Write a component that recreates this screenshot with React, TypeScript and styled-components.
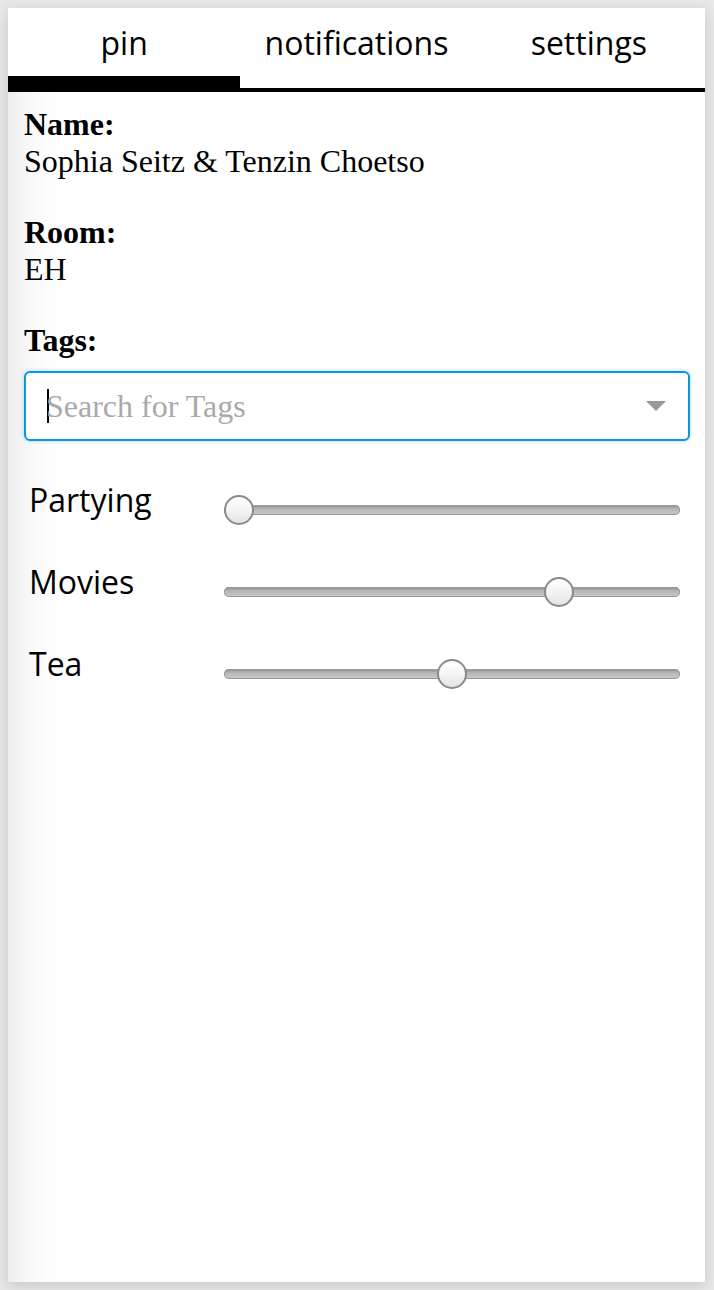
import styled, { createGlobalStyle } from 'styled-components';

const GlobalStyle = createGlobalStyle`
	html, body, #root {
		margin: 0;
		padding: 0;
		background: #e8e8e8;
	}
	body {
		padding: 8px 9px 8px 8px;
		box-sizing: border-box;
	}
`;

const tabs = ['pin', 'notifications', 'settings'];
const prefs = [
	{ label: 'Partying', value: 0 },
	{ label: 'Movies', value: 75 },
	{ label: 'Tea', value: 50 },
];

const App = () => {
	return (
		<>
			<GlobalStyle />
			<Panel>
				<TabBar>
					{tabs.map((t, i) => (
						<TabItem key={t} $active={i === 0}>
							{t}
						</TabItem>
					))}
				</TabBar>
				<Content>
					<Field>
						<FieldLabel>Name:</FieldLabel>
						<FieldValue>Sophia Seitz &amp; Tenzin Choetso</FieldValue>
					</Field>
					<Field>
						<FieldLabel>Room:</FieldLabel>
						<FieldValue>EH</FieldValue>
					</Field>
					<FieldLabel>Tags:</FieldLabel>
					<SelectBox>
						<Caret />
						<Placeholder>Search for Tags</Placeholder>
						<Arrow />
					</SelectBox>
					<PrefList>
						{prefs.map((p) => (
							<PrefRow key={p.label}>
								<PrefLabel>{p.label}</PrefLabel>
								<Track>
									<Thumb style={{ left: `calc((100% - 30px) * ${p.value / 100})` }} />
								</Track>
							</PrefRow>
						))}
					</PrefList>
				</Content>
			</Panel>
		</>
	);
};
export default App;

const Panel = styled.div`
	height: 1274px;
	background: linear-gradient(to right, #eeeeee 0px, #f8f8f8 20px, #fdfdfd 40px, #ffffff 55px);
	box-shadow: 0 4px 14px rgba(0, 0, 0, 0.14);
	display: flex;
	flex-direction: column;
`;
const TabBar = styled.div`
	display: grid;
	grid-template-columns: repeat(3, 1fr);
	border-bottom: 4px solid #000;
	background: #fff;
`;
const TabItem = styled.div<{ $active: boolean }>`
	height: 80px;
	display: flex;
	align-items: center;
	justify-content: center;
	font-family: 'Open Sans', sans-serif;
	font-size: 32px;
	color: #000;
	box-shadow: ${(p) => (p.$active ? 'inset 0 -12px 0 #000' : 'none')};
	padding-bottom: 12px;
	box-sizing: border-box;
`;
const Content = styled.div`
	padding: 14px 15px 0 16px;
	font-family: 'Liberation Serif', 'Times New Roman', serif;
	font-size: 32px;
	line-height: 37px;
	color: #000;
`;
const Field = styled.div`
	margin-bottom: 34px;
`;
const FieldLabel = styled.div`
	font-weight: 700;
`;
const FieldValue = styled.div``;
const SelectBox = styled.div`
	margin-top: 12px;
	height: 70px;
	box-sizing: border-box;
	border: 2px solid #0a97df;
	border-radius: 6px;
	box-shadow: 0 0 4px rgba(10, 151, 223, 0.35);
	background: #fff;
	display: flex;
	align-items: center;
	padding: 0 22px 0 21px;
`;
const Caret = styled.span`
	width: 2px;
	height: 34px;
	background: #000;
`;
const Placeholder = styled.span`
	flex: 1;
	color: #aaa;
	font-size: 32px;
	margin-left: -3px;
`;
const Arrow = styled.span`
	width: 0;
	height: 0;
	border-left: 10px solid transparent;
	border-right: 10px solid transparent;
	border-top: 10px solid #999;
`;
const PrefList = styled.div`
	padding: 49px 10px 0 5px;
	display: flex;
	flex-direction: column;
	gap: 42px;
`;
const PrefRow = styled.div`
	display: grid;
	grid-template-columns: 195px 1fr;
	align-items: center;
	height: 40px;
`;
const PrefLabel = styled.div`
	font-family: 'Open Sans', sans-serif;
	font-size: 32px;
	line-height: 40px;
	margin-top: -20px;
`;
const Track = styled.div`
	position: relative;
	height: 10px;
	border-radius: 5px;
	background: linear-gradient(to bottom, #8a8a8a 0%, #b8b8b8 40%, #c8c8c8 100%);
	box-shadow: inset 0 0 0 1px #999;
`;
const Thumb = styled.div`
	position: absolute;
	top: 50%;
	width: 30px;
	height: 30px;
	transform: translateY(-50%);
	border-radius: 50%;
	border: 2px solid #8a8a8a;
	background: linear-gradient(to bottom, #ffffff 0%, #f4f4f4 50%, #e4e4e4 100%);
	box-sizing: border-box;
`;
